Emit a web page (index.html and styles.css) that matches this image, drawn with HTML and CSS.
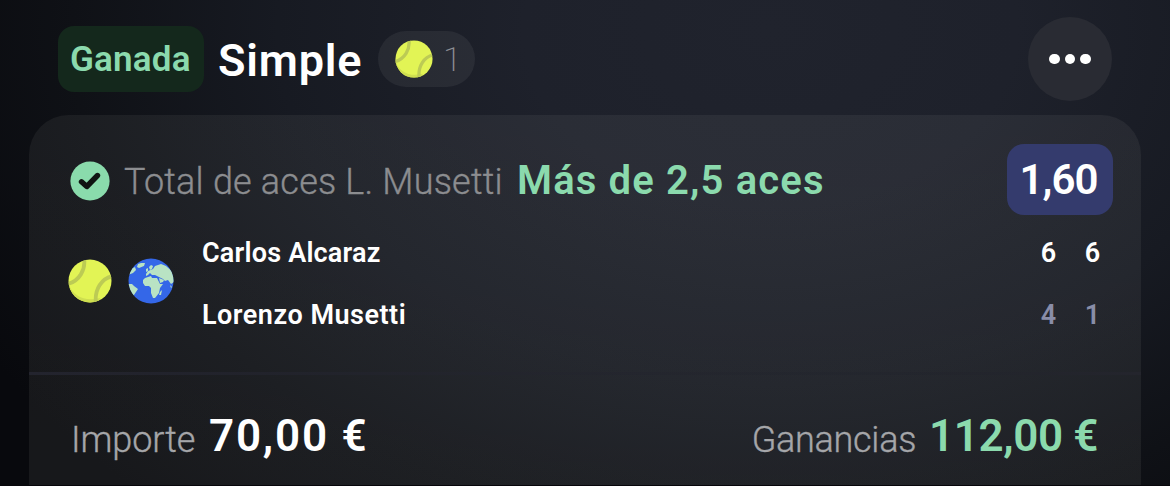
FILE: index.html
```html
<!DOCTYPE html>
<html lang="es">
<head>
<meta charset="utf-8">
<title>Apuesta simple</title>
<link rel="stylesheet" href="styles.css">
</head>
<body>
<svg class="defs" width="0" height="0" aria-hidden="true">
  <symbol id="ball" viewBox="0 0 44 44">
    <clipPath id="ballclip"><circle cx="22" cy="22" r="21.5"/></clipPath>
    <circle cx="22" cy="22" r="21.5" fill="#e2f455"/>
    <g clip-path="url(#ballclip)" fill="none">
      <path d="M0 24C5 38 18 43 32 39L30 45L8 44L-2 34Z" fill="#cfdf50"/>
      <path d="M16 -1C18 11 11 22 0 25" stroke="#bccb54" stroke-width="3.8"/>
      <path d="M45 17C34 19 26 30 28 45" stroke="#bccb54" stroke-width="3.8"/>
    </g>
  </symbol>
</svg>
<main class="screen">
  <header class="header">
    <span class="status">Ganada</span>
    <h1 class="title">Simple</h1>
    <span class="sport-pill"><svg class="pill-ball"><use href="#ball"/></svg><span class="pill-count">1</span></span>
    <button class="more" aria-label="Más opciones"><i class="dot"></i><i class="dot"></i><i class="dot"></i></button>
  </header>
  <section class="card">
    <div class="pick">
      <svg class="check" viewBox="0 0 40 40"><circle cx="20" cy="20" r="19.6" fill="#8adbac"/><path d="M11.500 20.800L16.800 25.500L27.500 14.500" fill="none" stroke="#101512" stroke-width="5.400" stroke-linecap="round" stroke-linejoin="round"/></svg>
      <span class="market">Total de aces L. Musetti</span>
      <span class="selection">Más de 2,5 aces</span>
      <span class="odds">1,60</span>
    </div>
    <div class="match">
      <svg class="match-ball"><use href="#ball"/></svg>
      <svg class="globe" viewBox="0 0 46 46">
        <clipPath id="globeclip"><circle cx="23" cy="23" r="22.500"/></clipPath>
        <circle cx="23" cy="23" r="22.500" fill="#3467e8"/>
        <g clip-path="url(#globeclip)" fill="#b9e3c4">
          <path d="M10 6L13 5L17 5L16 8L11 10L9 9Z"/>
          <path d="M7 9L8 12L5 15L0 17L1 12Z"/>
          <path d="M0 26L4 26L6 28L10 31L8 34L6 37L4 40L0 34Z"/>
          <path d="M18 11L20 10L20 13L18 14Z"/>
          <path d="M21 9L23 7L25 8L24 11L22 12Z"/>
          <path d="M18 16L20 13L25 11L27 8L33 6L38 8L46 15L46 24L43 26L40 22L37 23L35 21L31 19L27 17L24 17L22 15L20 17L18 18Z"/>
          <path d="M17 20L23 18L24 20L29 20L32 26L35 26L32 30L31 35L27 40L25 40L23 35L23 30L21 28L17 28L15 25L15 22Z"/>
          <path d="M31 20L36 22L35 24L32 25Z"/>
          <path d="M32 34L34 32L33 37L31 37Z"/>
          <path d="M42 27L44 29L43 30Z"/>
        </g>
      </svg>
      <div class="players"><span class="alcaraz">Carlos Alcaraz</span><span class="musetti">Lorenzo Musetti</span></div>
      <div class="scores"><span>6</span><span>6</span><span class="lost">4</span><span class="lost">1</span></div>
    </div>
    <div class="divider"></div>
    <footer class="totals">
      <span class="label stake-label">Importe</span>
      <strong class="amount stake">70,00 €</strong>
      <span class="label gain-label">Ganancias</span>
      <strong class="amount gain">112,00 €</strong>
    </footer>
  </section>
</main>
</body>
</html>
```
FILE: styles.css
```css
* { box-sizing: border-box; }
body { margin: 0; background: #07080b; font-family: Roboto, "Liberation Sans", sans-serif; color: #fff; }
.defs { display: block; height: 0; }
.screen {
  width: 1170px; height: 486px; overflow: hidden; padding: 0 29px;
  border-bottom: 1px solid #07060b;
  background: radial-gradient(ellipse 820px 590px at 770px 30px, #20232d 0%, #1e212b 30%, #171a22 60%, #0f1116 85%, #08090d 110%);
}
.header { height: 115px; padding-left: 29px; display: flex; align-items: flex-start; white-space: nowrap; }
.status {
  width: 146px; height: 66px; margin-top: 26px; padding-left: 12px; border-radius: 16px;
  background: #14281c; color: #8bdaad; font-size: 35px; line-height: 68px; font-weight: 600; letter-spacing: 0.2px;
}
.title { width: 174px; margin: 31px 0 0; padding-left: 14px; font-size: 45px; line-height: 60px; font-weight: 600; letter-spacing: 0.8px; }
.sport-pill { width: 97px; height: 56px; margin-top: 31px; padding-left: 17px; border-radius: 28px; background: rgba(255,255,255,.06); display: flex; align-items: center; }
.pill-ball { width: 38px; height: 38px; }
.pill-count { margin-left: 10px; font-size: 34px; font-weight: 200; color: #8f9095; }
.more {
  width: 84px; height: 84px; margin: 17px 0 0 auto; padding: 0; border: 0; border-radius: 50%;
  background: #292b33; display: flex; align-items: center; justify-content: center; gap: 5px;
}
.header .more { margin-right: 29px; }
.dot { width: 10.500px; height: 10.500px; border-radius: 50%; background: #fff; }
.card { height: 400px; border-radius: 40px 40px 0 0; background: linear-gradient(rgba(255,255,240,.055), rgba(255,255,240,.062)); }
.pick { height: 105px; padding: 29px 28px 0 41px; display: flex; white-space: nowrap; }
.check { width: 40px; height: 40px; margin-top: 17px; flex: none; }
.market { width: 393px; margin-left: 14px; color: #8c8d90; font-size: 36px; line-height: 77px; font-weight: 300; letter-spacing: 0.2px; -webkit-text-stroke: 0.35px #8c8d90; }
.selection { font-size: 40px; line-height: 73px; font-weight: 600; color: #8bdaad; letter-spacing: 1.15px; }
.odds { width: 106px; height: 71px; margin-left: auto; padding-right: 3px; border-radius: 17px; background: #343b6d; text-align: center; font-size: 42px; line-height: 72px; font-weight: 600; letter-spacing: -1px; }
.match { height: 152px; padding: 2px 34px 0 39px; display: flex; }
.match-ball { width: 44px; height: 44px; margin-top: 37px; }
.globe { width: 46px; height: 46px; margin: 36px 28px 0 16px; }
.players { display: grid; grid-template-rows: 62px 62px; font-size: 27px; line-height: 63px; font-weight: 600; white-space: nowrap; }
.alcaraz { letter-spacing: 0.2px; }
.musetti { letter-spacing: 0.5px; }
.scores { margin-left: auto; display: grid; grid-template: 62px 62px / 44px 28px; font-size: 27px; line-height: 63px; font-weight: 600; text-align: center; }
.scores span { width: 27px; }
.scores .lost { color: #898da8; }
.divider { height: 3px; background: linear-gradient(90deg, #23242e, rgba(35,36,46,.5) 45%, rgba(31,33,42,.3) 80%, #24252d); }
.totals { height: 140px; padding: 36px 43px 0 42px; display: flex; white-space: nowrap; }
.label { font-size: 36px; line-height: 58px; font-weight: 300; color: #a5a6a9; letter-spacing: -0.1px; -webkit-text-stroke: 0.35px #a5a6a9; }
.amount { font-size: 44px; line-height: 51px; font-weight: 600; }
.stake-label { width: 138px; }
.stake { letter-spacing: 1.8px; }
.gain-label { margin-left: auto; margin-right: 13px; letter-spacing: -0.3px; }
.gain { color: #8bdaad; letter-spacing: -0.4px; }
```
